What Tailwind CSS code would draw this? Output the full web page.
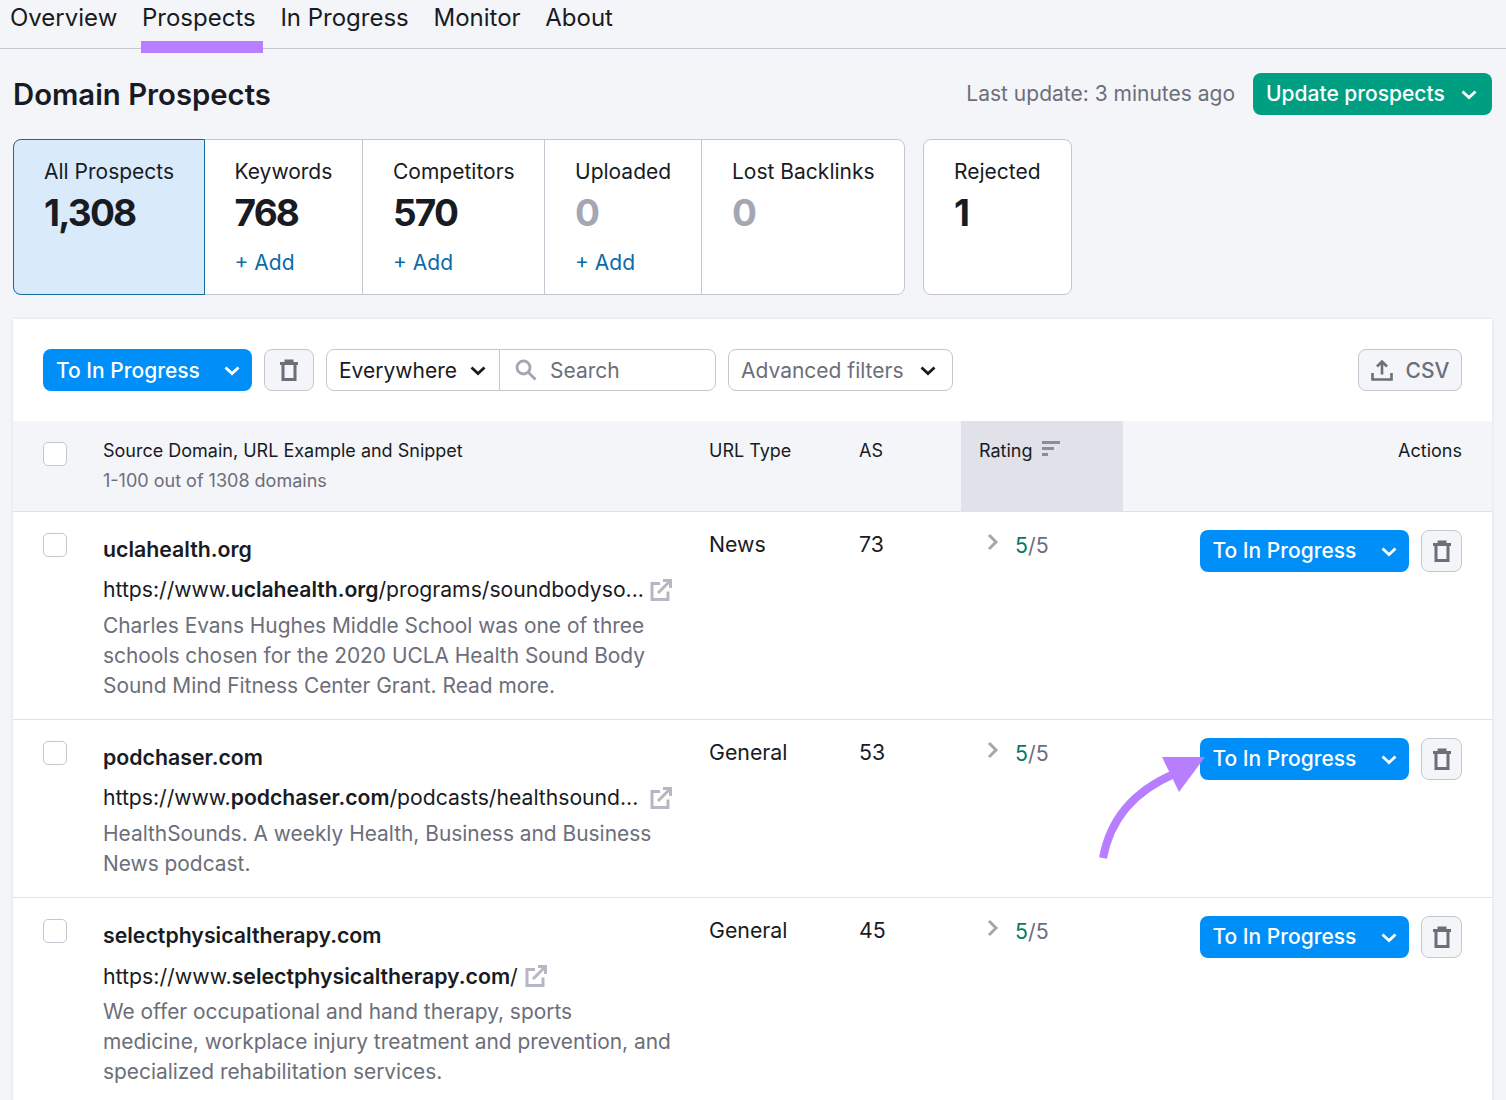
<!DOCTYPE html>
<html lang="en">
<head>
  <meta charset="UTF-8" />
  <title>Domain Prospects</title>
  <script src="https://cdn.jsdelivr.net/npm/@tailwindcss/browser@4"></script>
</head>
<body class="bg-[#f4f5f9] font-['Inter',sans-serif] text-[#191b23] h-[1100px] overflow-hidden relative">

  <!-- tabs -->
  <nav class="relative h-[49px] border-b border-[#c4c7cf] flex gap-[24.7px] pl-[10px] text-[24px] leading-[36px]">
    <a>Overview</a>
    <a>Prospects</a>
    <a>In Progress</a>
    <a>Monitor</a>
    <a>About</a>
    <div class="absolute left-[141px] top-[41px] w-[122px] h-[12px] bg-[#b77fff]"></div>
  </nav>

  <!-- title row -->
  <div class="flex items-center justify-between h-[90px] pl-[13px] pr-[14px]">
    <h1 class="text-[29.3px] font-semibold mt-[2px]">Domain Prospects</h1>
    <div class="flex items-center gap-[18px]">
      <span class="text-[21px] text-[#6c6e79]">Last update: 3 minutes ago</span>
      <button class="h-[42px] w-[239px] rounded-[8px] bg-[#009f81] text-white text-[21px] font-medium flex items-center justify-between pl-[13px] pr-[14px]">
        <span>Update prospects</span>
        <svg class="w-[18px] h-[18px]" viewBox="0 0 18 18" fill="none" stroke="currentColor" stroke-width="2.8"><path d="M2.500 6.500l6.500 6 6.500-6"/></svg>
      </button>
    </div>
  </div>

  <!-- category cards -->
  <div class="flex gap-[18px] ml-[13px]">
    <div class="flex h-[156px] bg-white border border-[#c4c7cf] rounded-[8px] text-[21px]">
      <div class="w-[192px] -my-px -ml-px pl-[30px] pt-[16px] bg-[#d9eafb] border border-[#1a6a9a] rounded-l-[8px]">
        <div class="leading-[32px]">All Prospects</div>
        <div class="text-[37px] font-bold tracking-[-1.8px] leading-[50px]">1,308</div>
      </div>
      <div class="w-[158px] pl-[29.5px] pt-[16px] border-r border-[#c4c7cf]">
        <div class="leading-[32px]">Keywords</div>
        <div class="text-[37px] font-bold tracking-[-1.8px] leading-[50px]">768</div>
        <div class="text-[#0c6ba8] leading-[32px] mt-[9px]">+ Add</div>
      </div>
      <div class="w-[182px] pl-[30px] pt-[16px] border-r border-[#c4c7cf]">
        <div class="leading-[32px]">Competitors</div>
        <div class="text-[37px] font-bold tracking-[-1.8px] leading-[50px]">570</div>
        <div class="text-[#0c6ba8] leading-[32px] mt-[9px]">+ Add</div>
      </div>
      <div class="w-[157px] pl-[30px] pt-[16px] border-r border-[#c4c7cf]">
        <div class="leading-[32px]">Uploaded</div>
        <div class="text-[37px] font-bold tracking-[-1.8px] leading-[50px] text-[#a4a6b3]">0</div>
        <div class="text-[#0c6ba8] leading-[32px] mt-[9px]">+ Add</div>
      </div>
      <div class="w-[202px] pl-[30px] pt-[16px]">
        <div class="leading-[32px]">Lost Backlinks</div>
        <div class="text-[37px] font-bold tracking-[-1.8px] leading-[50px] text-[#a4a6b3]">0</div>
      </div>
    </div>
    <div class="w-[149px] h-[156px] bg-white border border-[#c4c7cf] rounded-[8px] text-[21px] pl-[30px] pt-[16px]">
      <div class="leading-[32px]">Rejected</div>
      <div class="text-[37px] font-bold tracking-[-1.8px] leading-[50px]">1</div>
    </div>
  </div>

  <!-- table panel -->
  <div class="ml-[13px] mt-[24px] w-[1479px] bg-white shadow-[0_0_3px_rgba(25,27,35,0.12)]">

    <!-- toolbar -->
    <div class="h-[102px] flex items-center pl-[30px] pr-[30px]">
      <button class="h-[42px] w-[209px] rounded-[8px] bg-[#008ff8] text-white text-[21px] font-medium flex items-center justify-between pl-[13px] pr-[11px]">
        <span class="mt-[1px]">To In Progress</span>
        <svg class="w-[18px] h-[18px]" viewBox="0 0 18 18" fill="none" stroke="currentColor" stroke-width="2.8"><path d="M2.500 6.500l6.500 6 6.500-6"/></svg>
      </button>
      <button class="ml-[12px] h-[42px] w-[50px] rounded-[8px] bg-[#f4f5f9] border border-[#c4c7cf] flex items-center justify-center text-[#6c6e79]">
        <svg class="w-[22px] h-[22px]" viewBox="0 0 22 22" fill="none" stroke="currentColor" stroke-width="3"><path d="M2 4.500h18M8 4V2h6v2M5 5v15.500h12V5"/></svg>
      </button>
      <div class="ml-[12px] h-[42px] w-[390px] rounded-[8px] border border-[#c4c7cf] flex text-[21px]">
        <div class="w-[173px] border-r border-[#c4c7cf] flex items-center justify-between pl-[12px] pr-[12px]">
          <span class="mt-[1px]">Everywhere</span>
          <svg class="w-[18px] h-[18px]" viewBox="0 0 18 18" fill="none" stroke="#191b23" stroke-width="2.8"><path d="M2.500 6.500l6.500 6 6.500-6"/></svg>
        </div>
        <div class="flex items-center pl-[15px] gap-[13px] text-[#6c6e79]">
          <svg class="w-[22px] h-[22px]" viewBox="0 0 22 22" fill="none" stroke="#a4a6b3" stroke-width="2.800"><circle cx="8.500" cy="8.500" r="6.500"/><path d="M13.500 13.500l7 7"/></svg>
          <span class="mt-[1px]">Search</span>
        </div>
      </div>
      <div class="ml-[12px] h-[42px] w-[225px] rounded-[8px] border border-[#c4c7cf] flex items-center justify-between pl-[12px] pr-[15px] text-[21px] text-[#6c6e79]">
        <span class="mt-[1px]">Advanced filters</span>
        <svg class="w-[18px] h-[18px]" viewBox="0 0 18 18" fill="none" stroke="#191b23" stroke-width="2.8"><path d="M2.500 6.500l6.500 6 6.500-6"/></svg>
      </div>
      <button class="ml-auto h-[42px] w-[104px] rounded-[8px] bg-[#f4f5f9] border border-[#c4c7cf] flex items-center justify-center gap-[13px] text-[21px] font-medium text-[#6c6e79]">
        <svg class="w-[22px] h-[22px]" viewBox="0 0 22 22" fill="none" stroke="currentColor" stroke-width="2.6"><path d="M11 15.500V3M6 7.500l5-5 5 5M1.500 14v6.500h19V14"/></svg>
        <span class="mt-[1px]">CSV</span>
      </button>
    </div>

    <!-- table head -->
    <div class="grid grid-cols-[90px_606px_150px_102px_162px_1fr] h-[91px] bg-[#f4f5f9] border-b border-[#dfe1e8] text-[18px]">
      <div class="pl-[30px] pt-[21px]"><div class="w-[24px] h-[24px] rounded-[5px] bg-white border border-[#c4c7cf]"></div></div>
      <div class="pt-[15px]">
        <div class="leading-[30px]">Source Domain, URL Example and Snippet</div>
        <div class="leading-[30px] text-[#6c6e79]">1-100 out of 1308 domains</div>
      </div>
      <div class="pt-[15px] leading-[30px]">URL Type</div>
      <div class="pt-[15px] leading-[30px]">AS</div>
      <div class="pt-[15px] pl-[18px] leading-[30px] bg-[#e0e1e9] flex items-start gap-[8px]">
        Rating
        <svg class="w-[20px] h-[18px] mt-[4px]" viewBox="0 0 20 18" fill="none" stroke="#8b8d9a" stroke-width="3"><path d="M1 2.500h18M1 8.500h12M1 14.500h6"/></svg>
      </div>
      <div class="pt-[15px] pr-[30px] leading-[30px] text-right">Actions</div>
    </div>

    <!-- uclahealth -->
    <div class="grid grid-cols-[90px_606px_150px_102px_162px_1fr] border-b border-[#dfe1e8] h-[208px] text-[21.3px]">
      <div class="pl-[30px] pt-[21px]"><div class="w-[24px] h-[24px] rounded-[5px] bg-white border border-[#c4c7cf]"></div></div>
      <div class="pt-[22px]">
        <div class="leading-[30px] font-semibold">uclahealth.org</div>
        <div class="leading-[30px] text-[21.15px] mt-[11px] flex items-center gap-[6px] whitespace-nowrap">
          <span>https://www.<b class="font-semibold">uclahealth.org</b>/programs/soundbodyso...</span>
          <svg class="w-[22px] h-[22px]" viewBox="0 0 22 22" fill="none" stroke="#b5b7c2" stroke-width="3"><path d="M10 4.500H2v16h16v-8M8 14L20 2M13 1.500h7.500V9"/></svg>
        </div>
        <div class="leading-[30px] text-[20.9px] mt-[6px] text-[#6c6e79] whitespace-nowrap">Charles Evans Hughes Middle School was one of three<br>schools chosen for the 2020 UCLA Health Sound Body<br>Sound Mind Fitness Center Grant. Read more.</div>
      </div>
      <div class="pt-[17px] leading-[30px]">News</div>
      <div class="pt-[17px] leading-[30px]">73</div>
      <div class="pt-[17px] pl-[25px] flex items-start leading-[32px]">
        <svg class="w-[14px] h-[18px] mt-[4px] mr-[15px]" viewBox="0 0 14 18" fill="none" stroke="#a4a6b3" stroke-width="3"><path d="M3 2l7 7-7 7"/></svg>
        <span class="text-[#6c6e79]"><span class="text-[#007c65]">5</span>/5</span>
      </div>
      <div class="pt-[18px] pr-[30px] flex justify-end gap-[12px]">
        <button class="h-[42px] w-[209px] rounded-[8px] bg-[#008ff8] text-white text-[21px] font-medium flex items-center justify-between pl-[12.5px] pr-[11px]">
          To In Progress
          <svg class="w-[18px] h-[18px]" viewBox="0 0 18 18" fill="none" stroke="currentColor" stroke-width="2.8"><path d="M2.500 6.500l6.500 6 6.500-6"/></svg>
        </button>
        <button class="h-[42px] w-[41px] rounded-[8px] bg-[#f4f5f9] border border-[#c4c7cf] flex items-center justify-center text-[#6c6e79]">
          <svg class="w-[22px] h-[22px]" viewBox="0 0 22 22" fill="none" stroke="currentColor" stroke-width="3"><path d="M2 4.500h18M8 4V2h6v2M5 5v15.500h12V5"/></svg>
        </button>
      </div>
    </div>

    <!-- podchaser -->
    <div class="grid grid-cols-[90px_606px_150px_102px_162px_1fr] border-b border-[#dfe1e8] h-[178px] text-[21.3px]">
      <div class="pl-[30px] pt-[21px]"><div class="w-[24px] h-[24px] rounded-[5px] bg-white border border-[#c4c7cf]"></div></div>
      <div class="pt-[22px]">
        <div class="leading-[30px] font-semibold">podchaser.com</div>
        <div class="leading-[30px] text-[21.15px] mt-[11px] flex items-center gap-[12px] whitespace-nowrap">
          <span>https://www.<b class="font-semibold">podchaser.com</b>/podcasts/healthsound...</span>
          <svg class="w-[22px] h-[22px]" viewBox="0 0 22 22" fill="none" stroke="#b5b7c2" stroke-width="3"><path d="M10 4.500H2v16h16v-8M8 14L20 2M13 1.500h7.500V9"/></svg>
        </div>
        <div class="leading-[30px] text-[20.9px] mt-[6px] text-[#6c6e79] whitespace-nowrap">HealthSounds. A weekly Health, Business and Business<br>News podcast.</div>
      </div>
      <div class="pt-[17px] leading-[30px]">General</div>
      <div class="pt-[17px] leading-[30px]">53</div>
      <div class="pt-[17px] pl-[25px] flex items-start leading-[32px]">
        <svg class="w-[14px] h-[18px] mt-[4px] mr-[15px]" viewBox="0 0 14 18" fill="none" stroke="#a4a6b3" stroke-width="3"><path d="M3 2l7 7-7 7"/></svg>
        <span class="text-[#6c6e79]"><span class="text-[#007c65]">5</span>/5</span>
      </div>
      <div class="pt-[18px] pr-[30px] flex justify-end gap-[12px]">
        <button class="h-[42px] w-[209px] rounded-[8px] bg-[#008ff8] text-white text-[21px] font-medium flex items-center justify-between pl-[12.5px] pr-[11px]">
          To In Progress
          <svg class="w-[18px] h-[18px]" viewBox="0 0 18 18" fill="none" stroke="currentColor" stroke-width="2.8"><path d="M2.500 6.500l6.500 6 6.500-6"/></svg>
        </button>
        <button class="h-[42px] w-[41px] rounded-[8px] bg-[#f4f5f9] border border-[#c4c7cf] flex items-center justify-center text-[#6c6e79]">
          <svg class="w-[22px] h-[22px]" viewBox="0 0 22 22" fill="none" stroke="currentColor" stroke-width="3"><path d="M2 4.500h18M8 4V2h6v2M5 5v15.500h12V5"/></svg>
        </button>
      </div>
    </div>

    <!-- selectphysicaltherapy -->
    <div class="grid grid-cols-[90px_606px_150px_102px_162px_1fr] h-[210px] text-[21.3px]">
      <div class="pl-[30px] pt-[21px]"><div class="w-[24px] h-[24px] rounded-[5px] bg-white border border-[#c4c7cf]"></div></div>
      <div class="pt-[22px]">
        <div class="leading-[30px] font-semibold">selectphysicaltherapy.com</div>
        <div class="leading-[30px] text-[21.3px] mt-[11px] flex items-center gap-[7px] whitespace-nowrap">
          <span>https://www.<b class="font-semibold">selectphysicaltherapy.com</b>/</span>
          <svg class="w-[22px] h-[22px]" viewBox="0 0 22 22" fill="none" stroke="#b5b7c2" stroke-width="3"><path d="M10 4.500H2v16h16v-8M8 14L20 2M13 1.500h7.500V9"/></svg>
        </div>
        <div class="leading-[30px] text-[20.9px] mt-[6px] text-[#6c6e79] whitespace-nowrap">We offer occupational and hand therapy, sports<br>medicine, workplace injury treatment and prevention, and<br>specialized rehabilitation services.</div>
      </div>
      <div class="pt-[17px] leading-[30px]">General</div>
      <div class="pt-[17px] leading-[30px]">45</div>
      <div class="pt-[17px] pl-[25px] flex items-start leading-[32px]">
        <svg class="w-[14px] h-[18px] mt-[4px] mr-[15px]" viewBox="0 0 14 18" fill="none" stroke="#a4a6b3" stroke-width="3"><path d="M3 2l7 7-7 7"/></svg>
        <span class="text-[#6c6e79]"><span class="text-[#007c65]">5</span>/5</span>
      </div>
      <div class="pt-[18px] pr-[30px] flex justify-end gap-[12px]">
        <button class="h-[42px] w-[209px] rounded-[8px] bg-[#008ff8] text-white text-[21px] font-medium flex items-center justify-between pl-[12.5px] pr-[11px]">
          To In Progress
          <svg class="w-[18px] h-[18px]" viewBox="0 0 18 18" fill="none" stroke="currentColor" stroke-width="2.8"><path d="M2.500 6.500l6.500 6 6.500-6"/></svg>
        </button>
        <button class="h-[42px] w-[41px] rounded-[8px] bg-[#f4f5f9] border border-[#c4c7cf] flex items-center justify-center text-[#6c6e79]">
          <svg class="w-[22px] h-[22px]" viewBox="0 0 22 22" fill="none" stroke="currentColor" stroke-width="3"><path d="M2 4.500h18M8 4V2h6v2M5 5v15.500h12V5"/></svg>
        </button>
      </div>
    </div>
  </div>

  <!-- annotation arrow -->
  <svg class="absolute left-[1090px] top-[750px] w-[120px] h-[115px]" viewBox="0 0 120 115" fill="none">
    <path d="M13 108C20 70 42 42 84 24" stroke="#b77fff" stroke-width="8"/>
    <path d="M72 7H115L89 42Z" fill="#b77fff"/>
  </svg>
</body>
</html>
